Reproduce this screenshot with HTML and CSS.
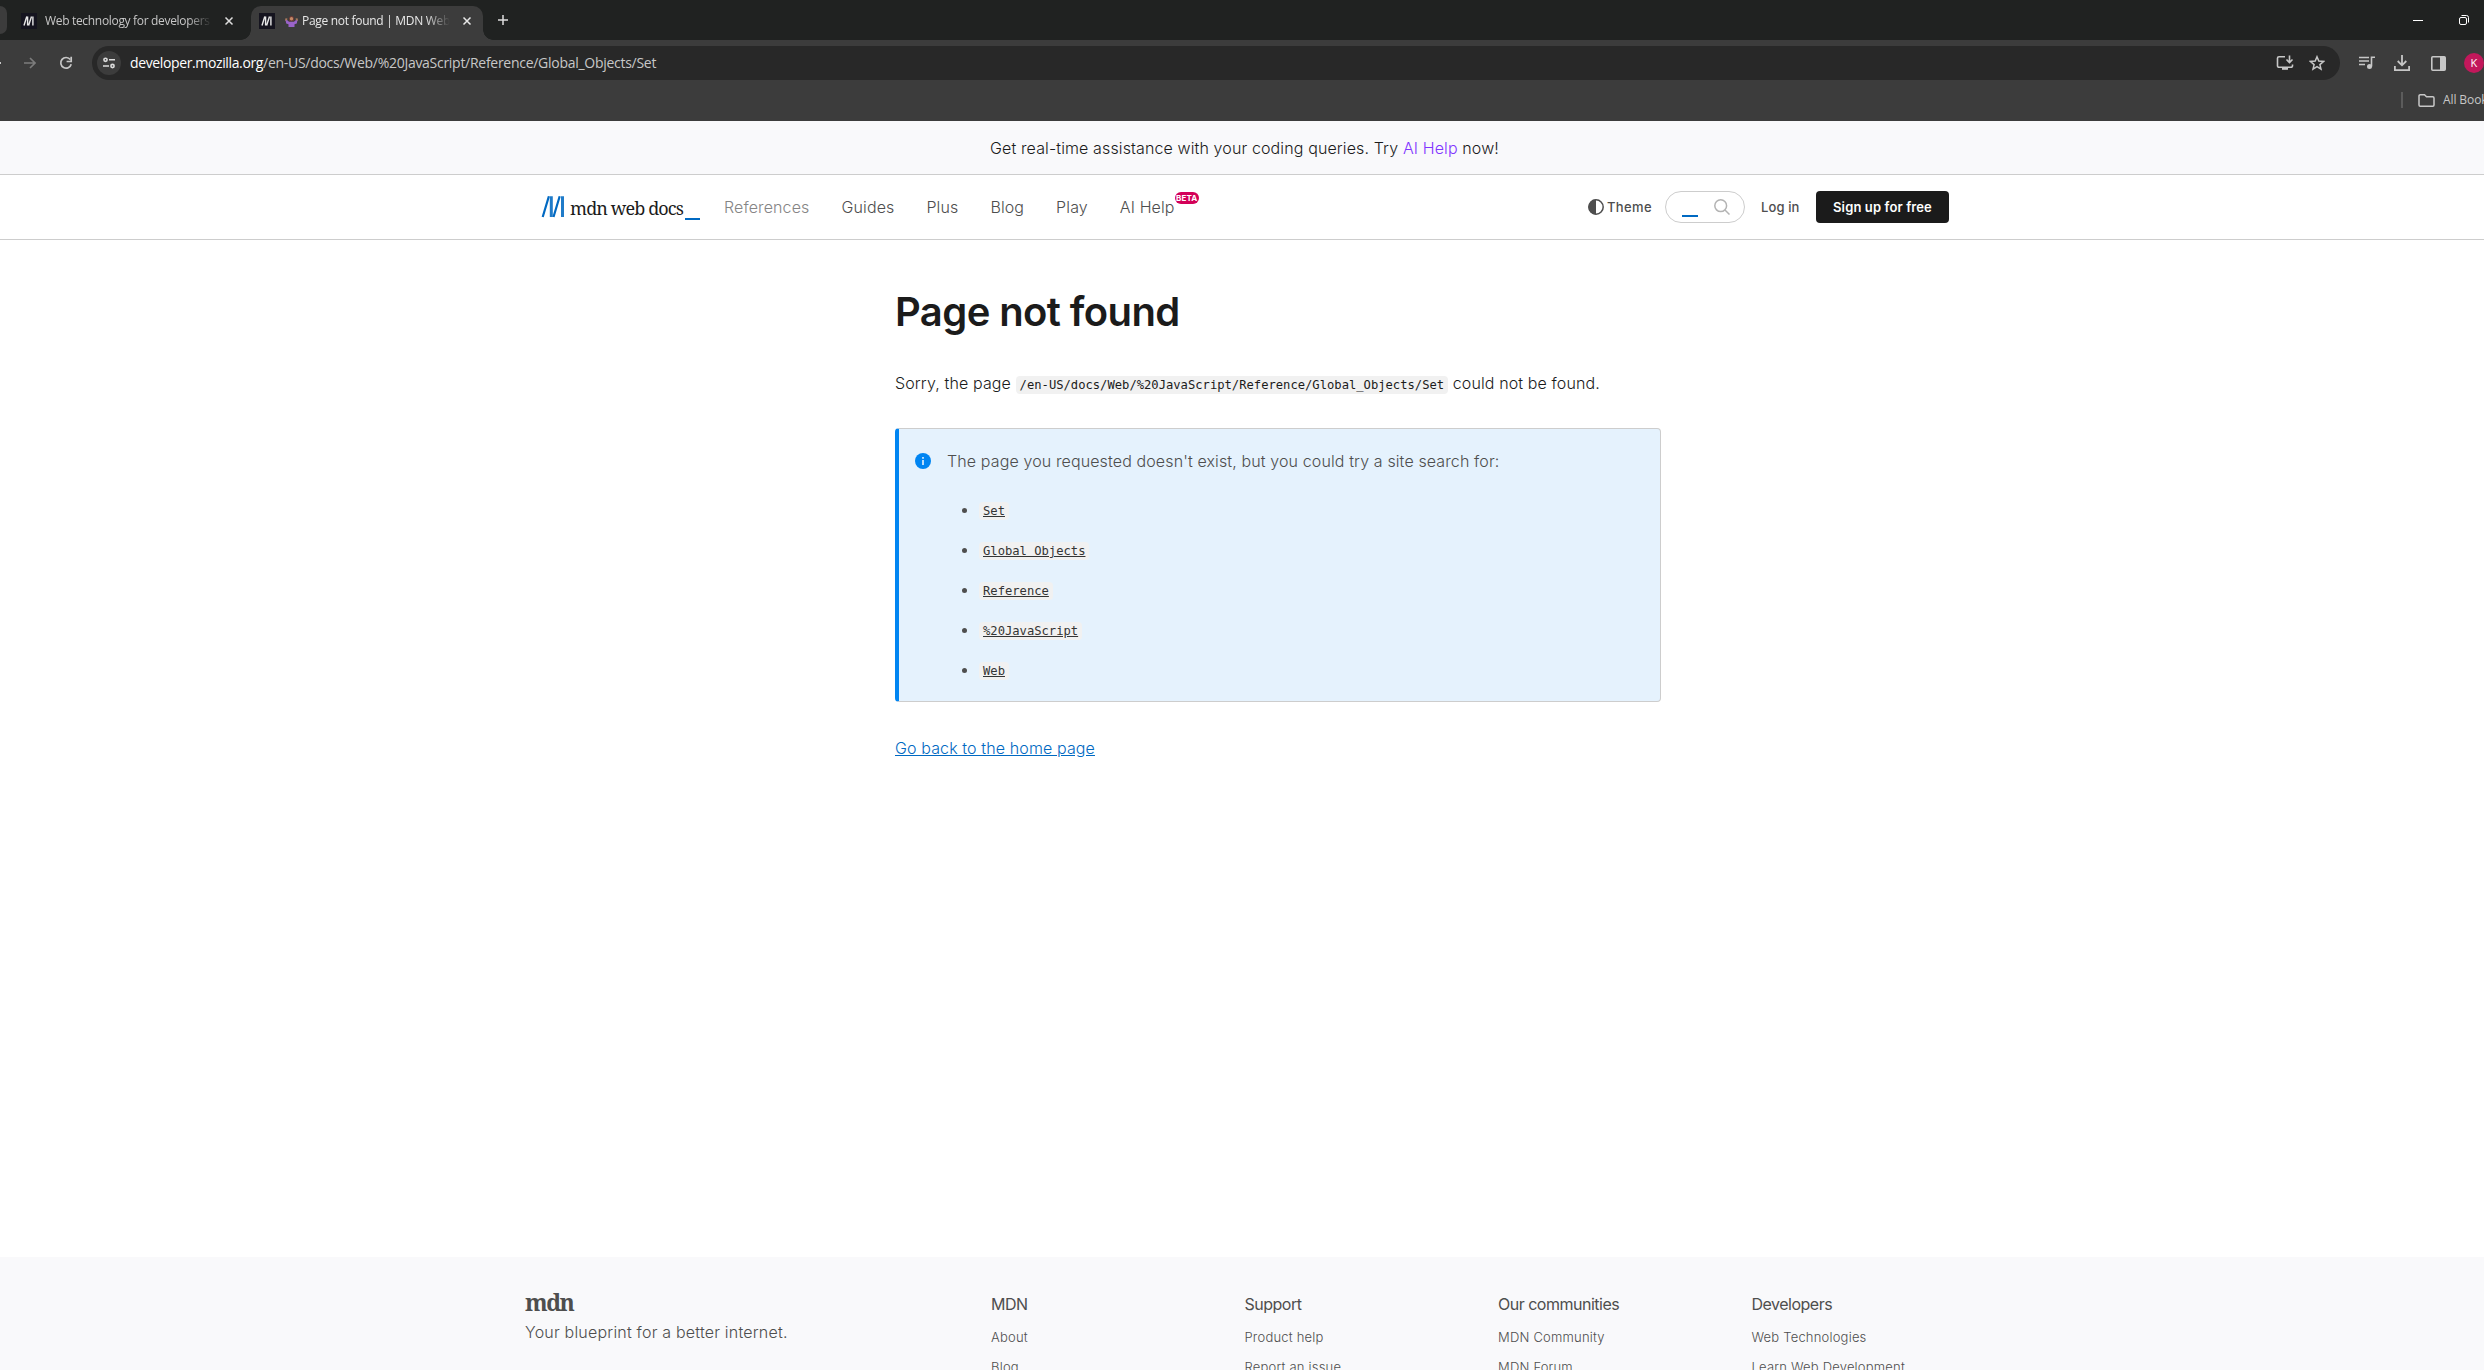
FILE: index.html
```html
<!DOCTYPE html>
<html lang="en-US">
<head>
<meta charset="utf-8">
<title>Page not found | MDN Web Docs</title>
<link rel="stylesheet" href="styles.css">
</head>
<body>
<div class="browser">
  <div class="tabstrip">
    <div class="tab-stub"></div>
    <div class="tab">
      <svg class="favicon" viewBox="0 0 16 16"><rect width="16" height="16" fill="#15141f"/><path d="M3 12.5 5.8 3.5M6.6 12.5V3.5M7.6 12.5l2.9-9M11.9 3.5v9" stroke="#e8e8e8" stroke-width="1.4" fill="none"/></svg>
      <span class="tab-title t1">Web technology for developers | MDN</span>
      <svg class="close" viewBox="0 0 10 10"><path d="M1.5 1.5l7 7M8.5 1.5l-7 7" stroke="#dedede" stroke-width="1.5"/></svg>
    </div>
    <div class="tab active">
      <svg class="favicon" viewBox="0 0 16 16"><rect width="16" height="16" fill="#15141f"/><path d="M3 12.5 5.8 3.5M6.6 12.5V3.5M7.6 12.5l2.9-9M11.9 3.5v9" stroke="#e8e8e8" stroke-width="1.4" fill="none"/></svg>
      <svg class="shrug" viewBox="0 0 13 11"><path d="M4 2.500a2.500 2.500 0 0 1 5 0v2.800H4z" fill="#6b3a35"/><circle cx="6.500" cy="2.800" r="1.700" fill="#c58a68"/><path d="M1 5V2.500M12 5V2.500M.3 3h2M10.700 3h2" stroke="#c58a68" stroke-width="1.200"/><path d="M.6 4.300h1.800l1.600 1.500h5l1.600-1.500h1.800l-.6 3.200-2.300.7V11h-6V8.200l-2.300-.7z" fill="#9a63c9"/></svg>
      <span class="tab-title t2">Page not found | MDN Web Docs</span>
      <svg class="close" viewBox="0 0 10 10"><path d="M1.500 1.500l7 7M8.500 1.500l-7 7" stroke="#e8e8e8" stroke-width="1.500"/></svg>
    </div>
    <svg class="newtab" viewBox="0 0 12 12"><path d="M6 1v10M1 6h10" stroke="#dedede" stroke-width="1.500"/></svg>
    <div class="window-buttons">
      <svg class="min" viewBox="0 0 10 10"><path d="M0 5.500h10" stroke="#fff"/></svg>
      <svg class="restore" viewBox="0 0 10 10"><rect x=".5" y="2.500" width="7" height="7" rx="1.500" fill="none" stroke="#fff"/><path d="M2.500.5H7.500a2 2 0 0 1 2 2v5" fill="none" stroke="#fff"/></svg>
    </div>
  </div>
  <div class="toolbar">
    <div class="back"></div>
    <svg class="forward" viewBox="0 0 12 12"><path d="M0 6h11M6 1l5 5-5 5" fill="none" stroke="#7c7c7c" stroke-width="1.600"/></svg>
    <svg class="reload" viewBox="0 0 14 14"><path d="M11.300 3.600A5.300 5.300 0 1 0 12.200 8.200" fill="none" stroke="#c7c7c7" stroke-width="1.700"/><path d="M12.200.8v4.700H7.600" fill="none" stroke="#c7c7c7" stroke-width="1.700"/></svg>
    <div class="omnibox">
      <span class="site-info"><svg viewBox="0 0 12 12"><g fill="none" stroke="#dcdcdc" stroke-width="1.600"><circle cx="2.500" cy="2.800" r="1.600"/><path d="M6 2.800h6M0 9h6"/><circle cx="9.500" cy="9" r="1.600"/></g></svg></span>
      <span class="url"><b>developer.mozilla.org</b>/en-US/docs/Web/%20JavaScript/Reference/Global_Objects/Set</span>
      <svg class="install" viewBox="0 0 18 16"><path d="M9 1.700H3A1.500 1.500 0 0 0 1.500 3.200v7.600A1.500 1.500 0 0 0 3 12.300h12a1.500 1.500 0 0 0 1.500-1.500V9.500" fill="none" stroke="#c7c7c7" stroke-width="1.600"/><path d="M6 12h6v2.800H6z" fill="#c7c7c7"/><path d="M13.500.5v6.500M10.500 4.500l3 3 3-3" fill="none" stroke="#c7c7c7" stroke-width="1.600"/></svg>
      <svg class="star" viewBox="0 0 16 16"><path d="M8 1.800l1.800 4.300 4.700.4-3.600 3.100 1.100 4.600-4-2.500-4 2.500 1.100-4.600-3.600-3.100 4.700-.4z" fill="none" stroke="#c7c7c7" stroke-width="1.500"/></svg>
    </div>
    <div class="actions">
      <svg class="media" viewBox="0 0 16 14"><path d="M0 1.500h10M0 5h10M0 8.500h6M12.500 10.500V1.200H16" fill="none" stroke="#c7c7c7" stroke-width="1.600"/><circle cx="10.500" cy="10.500" r="2.500" fill="#c7c7c7"/></svg>
      <svg class="download" viewBox="0 0 16 16"><path d="M8 0v10M3.700 6 8 10.300 12.300 6M.9 11v4.100h14.200V11" fill="none" stroke="#c7c7c7" stroke-width="1.800"/></svg>
      <svg class="panel" viewBox="0 0 15 15"><rect x=".8" y=".8" width="13.400" height="13.400" rx="1" fill="none" stroke="#c7c7c7" stroke-width="1.600"/><path d="M9 1h5v13H9z" fill="#c7c7c7"/></svg>
      <span class="avatar">K</span>
    </div>
  </div>
  <div class="bookmarks">
    <span class="bm-sep"></span>
    <svg class="folder" viewBox="0 0 17 13"><path d="M1 2a1.200 1.200 0 0 1 1.200-1.200H6.500l2 2H14.800A1.200 1.200 0 0 1 16 4v7a1.200 1.200 0 0 1-1.200 1.200H2.200A1.200 1.200 0 0 1 1 11z" fill="none" stroke="#c7c7c7" stroke-width="1.500"/></svg>
    <span class="bm-text">All Bookmarks</span>
  </div>
</div>

<div class="banner"><p>Get real-time assistance with your coding queries. Try <a>AI Help</a> now!</p></div>

<header class="header">
  <div class="logo">
    <svg class="logo-mark" viewBox="0 0 24 22"><g fill="none" stroke="#0069c2"><path d="M1.700 21 7.900.3M12.500 21 18.700.3" stroke-width="2.200"/><path d="M10.300.3V21M21.500.3V21" stroke-width="3" opacity=".88"/></g></svg>
    <span class="logo-text">mdn web docs</span>
    <span class="logo-cursor"></span>
  </div>
  <nav class="nav">
    <a class="n1">References</a><a>Guides</a><a>Plus</a><a>Blog</a><a>Play</a><a class="n6">AI Help<sup class="beta">BETA</sup></a>
  </nav>
  <div class="tools">
    <svg class="theme-icon" viewBox="0 0 16 16"><circle cx="8" cy="8" r="7.200" fill="none" stroke="#4e4e4e" stroke-width="1.500"/><path d="M8 .5a7.500 7.500 0 0 0 0 15z" fill="#4e4e4e"/></svg>
    <span class="theme">Theme</span>
    <div class="search"><span class="cursor"></span><svg viewBox="0 0 16 16"><circle cx="6.700" cy="6.700" r="5.900" fill="none" stroke="#b3b3b3" stroke-width="1.500"/><path d="M11 11l4.500 4.500" stroke="#b3b3b3" stroke-width="1.500"/></svg></div>
    <a class="login">Log in</a>
    <a class="signup">Sign up for free</a>
  </div>
</header>

<main class="main">
  <h1>Page not found</h1>
  <p class="sorry">Sorry, the page <code>/en-US/docs/Web/%20JavaScript/Reference/Global_Objects/Set</code> could not be found.</p>
  <section class="note">
    <div class="note-head">
      <svg viewBox="0 0 16 16"><circle cx="8" cy="8" r="8" fill="#0085f2"/><path d="M7.200 7h1.600v5H7.200zM7.200 4h1.600v1.700H7.200z" fill="#e5f2fd"/></svg>
      <p>The page you requested doesn't exist, but you could try a site search for:</p>
    </div>
    <ul>
      <li><code>Set</code></li>
      <li><code>Global Objects</code></li>
      <li><code>Reference</code></li>
      <li><code>%20JavaScript</code></li>
      <li><code>Web</code></li>
    </ul>
  </section>
  <a class="home">Go back to the home page</a>
</main>

<footer class="footer">
  <div class="about"><div class="foot-logo">mdn</div><p>Your blueprint for a better internet.</p></div>
  <div class="col"><h2>MDN</h2><a>About</a><a>Blog</a></div>
  <div class="col"><h2>Support</h2><a>Product help</a><a>Report an issue</a></div>
  <div class="col"><h2>Our communities</h2><a>MDN Community</a><a>MDN Forum</a></div>
  <div class="col"><h2>Developers</h2><a>Web Technologies</a><a>Learn Web Development</a></div>
</footer>
</body>
</html>
```
FILE: styles.css
```css
* { box-sizing: border-box; }
html, body { height: 1370px; overflow: hidden; }
body { margin: 0; background: #fff; color: #1b1b1b; font: 300 16px/24px Inter, sans-serif; letter-spacing: 0.12px; display: flex; flex-direction: column; }
p, h1, h2, ul { margin: 0; padding: 0; }
svg { display: block; flex: none; }

.browser { height: 121px; flex: none; background: #3c3c3c; font-family: "Open Sans", sans-serif; overflow: hidden; }
.tabstrip { height: 40px; background: #202221; display: flex; align-items: flex-start; }
.tab-stub { width: 7px; height: 28px; margin-top: 6px; background: #3c3c3c; border-radius: 0 8px 8px 0; }
.tab { width: 244px; height: 34px; margin-top: 6px; padding: 0 10px 4px 14px; display: flex; align-items: center; color: #c7c7c7; font-size: 12px; font-weight: 400; }
.tab.active { width: 232px; padding: 0 10px 4px 8px; background: #3c3c3c; border-radius: 10px 10px 0 0; color: #e8e8e8; position: relative; }
.tab.active::before, .tab.active::after { content: ""; position: absolute; bottom: 0; width: 10px; height: 10px; }
.tab.active::before { left: -10px; background: radial-gradient(circle at 0 0, transparent 9.5px, #3c3c3c 10px); }
.tab.active::after { right: -10px; background: radial-gradient(circle at 100% 0, transparent 9.5px, #3c3c3c 10px); }
.favicon { width: 16px; height: 16px; }
.shrug { width: 13px; height: 11px; margin-left: 10px; }
.tab-title { flex: none; white-space: nowrap; overflow: hidden; line-height: 18px; -webkit-mask-image: linear-gradient(90deg, #000 calc(100% - 24px), transparent); mask-image: linear-gradient(90deg, #000 calc(100% - 24px), transparent); }
.t1 { width: 167px; margin-left: 8px; letter-spacing: -0.32px; }
.t2 { width: 148px; margin-left: 4px; letter-spacing: -0.3px; }
.close { width: 10px; height: 10px; margin-left: 12px; }
.newtab { width: 12px; height: 12px; margin: 14px 0 0 14px; }
.window-buttons { margin: 15px 15px 0 auto; display: flex; gap: 36px; }
.min, .restore { width: 10px; height: 10px; }

.toolbar { height: 46px; display: flex; align-items: center; }
.back { width: 2px; height: 2px; background: #c7c7c7; }
.forward { width: 12px; height: 12px; margin-left: 23px; }
.reload { width: 14px; height: 14px; margin-left: 23px; }
.omnibox { flex: none; width: 2248px; height: 34px; margin-left: 19px; border-radius: 17px; background: #282828; display: flex; align-items: center; padding: 0 15px 0 5px; }
.site-info { width: 24px; height: 24px; border-radius: 50%; background: #3c3c3c; display: grid; place-items: center; }
.site-info svg { width: 12px; height: 12px; }
.url { margin: 0 auto 0 9px; font-size: 14px; font-weight: 400; letter-spacing: -0.28px; color: #c7c7c7; white-space: nowrap; }
.url b { font-weight: 400; color: #fff; letter-spacing: -0.37px; }
.install { width: 18px; height: 16px; margin-right: 15px; }
.star { width: 16px; height: 16px; }
.actions { display: flex; align-items: center; }
.media { width: 16px; height: 14px; margin-left: 19px; }
.download { width: 16px; height: 16px; margin-left: 19px; }
.panel { width: 15px; height: 15px; margin-left: 21px; }
.avatar { flex: none; width: 20px; height: 20px; margin-left: 18px; border-radius: 50%; background: #c2185b; color: #fff; font: 400 11px/20px "Open Sans", sans-serif; text-align: center; }
.bookmarks { height: 28px; display: flex; align-items: center; padding-left: 2401px; }
.bm-sep { flex: none; width: 2px; height: 16px; background: #5c5c5c; }
.folder { width: 17px; height: 13px; margin-left: 15px; }
.bm-text { margin-left: 8px; font-size: 12px; font-weight: 400; letter-spacing: -0.1px; color: #c7c7c7; white-space: nowrap; }

.banner { height: 54px; flex: none; background: #f9f9fb; border-bottom: 1px solid #cdcdcd; display: flex; justify-content: center; align-items: center; padding: 1px 0 0 5px; white-space: nowrap; }
.banner a { color: #8034ff; }

.header { height: 65px; flex: none; border-bottom: 1px solid #cdcdcd; display: flex; align-items: center; padding: 0 535px 0 541px; }
.logo { width: 159px; height: 24px; display: flex; }
.logo-mark { width: 24px; height: 22px; margin-top: 1px; }
.logo-text { margin-left: 5px; width: 115px; font: 400 18px/26px "Noto Serif", "Liberation Serif", serif; letter-spacing: -0.88px; white-space: nowrap; }
.logo-cursor { width: 15px; height: 2px; margin-top: 23px; background: #0069c2; }
.nav { margin: 0 0 0 24px; display: flex; gap: 32px; color: #4e4e4e; white-space: nowrap; }
.n1 { color: #858585; }
.n6 { position: relative; }
.beta { position: absolute; left: 100%; top: -3px; width: 24px; height: 12px; border-radius: 6px; background: #d30058; color: #fff; font: 700 8px/12px Inter, sans-serif; text-align: center; }
.tools { margin-left: auto; display: flex; align-items: center; white-space: nowrap; font-size: 13px; font-weight: 500; color: #4e4e4e; }
.theme-icon { width: 16px; height: 16px; }
.theme { margin-left: 3px; width: 44px; letter-spacing: 0.35px; }
.search { margin-left: 14px; width: 80px; height: 32px; border: 1px solid #cdcdcd; border-radius: 16px; display: flex; padding: 7px 14px 0 16px; justify-content: space-between; }
.search svg { width: 16px; height: 16px; }
.cursor { width: 16px; height: 2px; margin-top: 16px; background: #0069c2; }
.login { margin-left: 16px; width: 39px; }
.signup { margin-left: 16px; width: 133px; height: 32px; border-radius: 4px; background: #1b1b1b; color: #fff; font-weight: 600; line-height: 32px; text-align: center; }

.main { width: 766px; margin: 48px 0 0 895px; flex: 1; }
h1 { font-size: 40px; line-height: 48px; font-weight: 600; letter-spacing: -0.6px; }
.sorry { margin-top: 35px; white-space: nowrap; }
code { font: 400 12.16px/18px "DejaVu Sans Mono", monospace; letter-spacing: 0; background: #f1f1f1; border-radius: 4px; padding: 2px 4px; }
.note { margin-top: 33px; height: 274px; border: 1px solid #cdcdcd; border-left: 4px solid #0085f2; border-radius: 4px; background: #e5f2fd; color: #4e4e4e; padding: 20px 16px; }
.note-head { display: flex; align-items: center; gap: 16px; height: 24px; }
.note-head svg { width: 16px; height: 16px; }
ul { margin: 24px 0 0 64px; }
li { height: 24px; margin-bottom: 16px; }
li code { text-decoration: underline; color: #343434; }
.home { display: inline-block; margin-top: 34px; color: #0069c2; text-decoration: underline; }

.footer { height: 113px; flex: none; background: #f9f9fb; color: #4e4e4e; padding: 35px 0 0 525px; display: flex; overflow: hidden; white-space: nowrap; }
.about { width: 466px; letter-spacing: 0.2px; }
.foot-logo { font: 700 23px/20px "Noto Serif", "Liberation Serif", serif; letter-spacing: -1.5px; height: 28px; }
.col { width: 253.500px; display: flex; flex-direction: column; }
.col h2 { font-size: 16px; line-height: 24px; font-weight: 400; letter-spacing: -0.5px; margin-bottom: 6px; }
.col a { font-size: 13px; line-height: 30px; height: 31px; letter-spacing: 0.2px; }
```
